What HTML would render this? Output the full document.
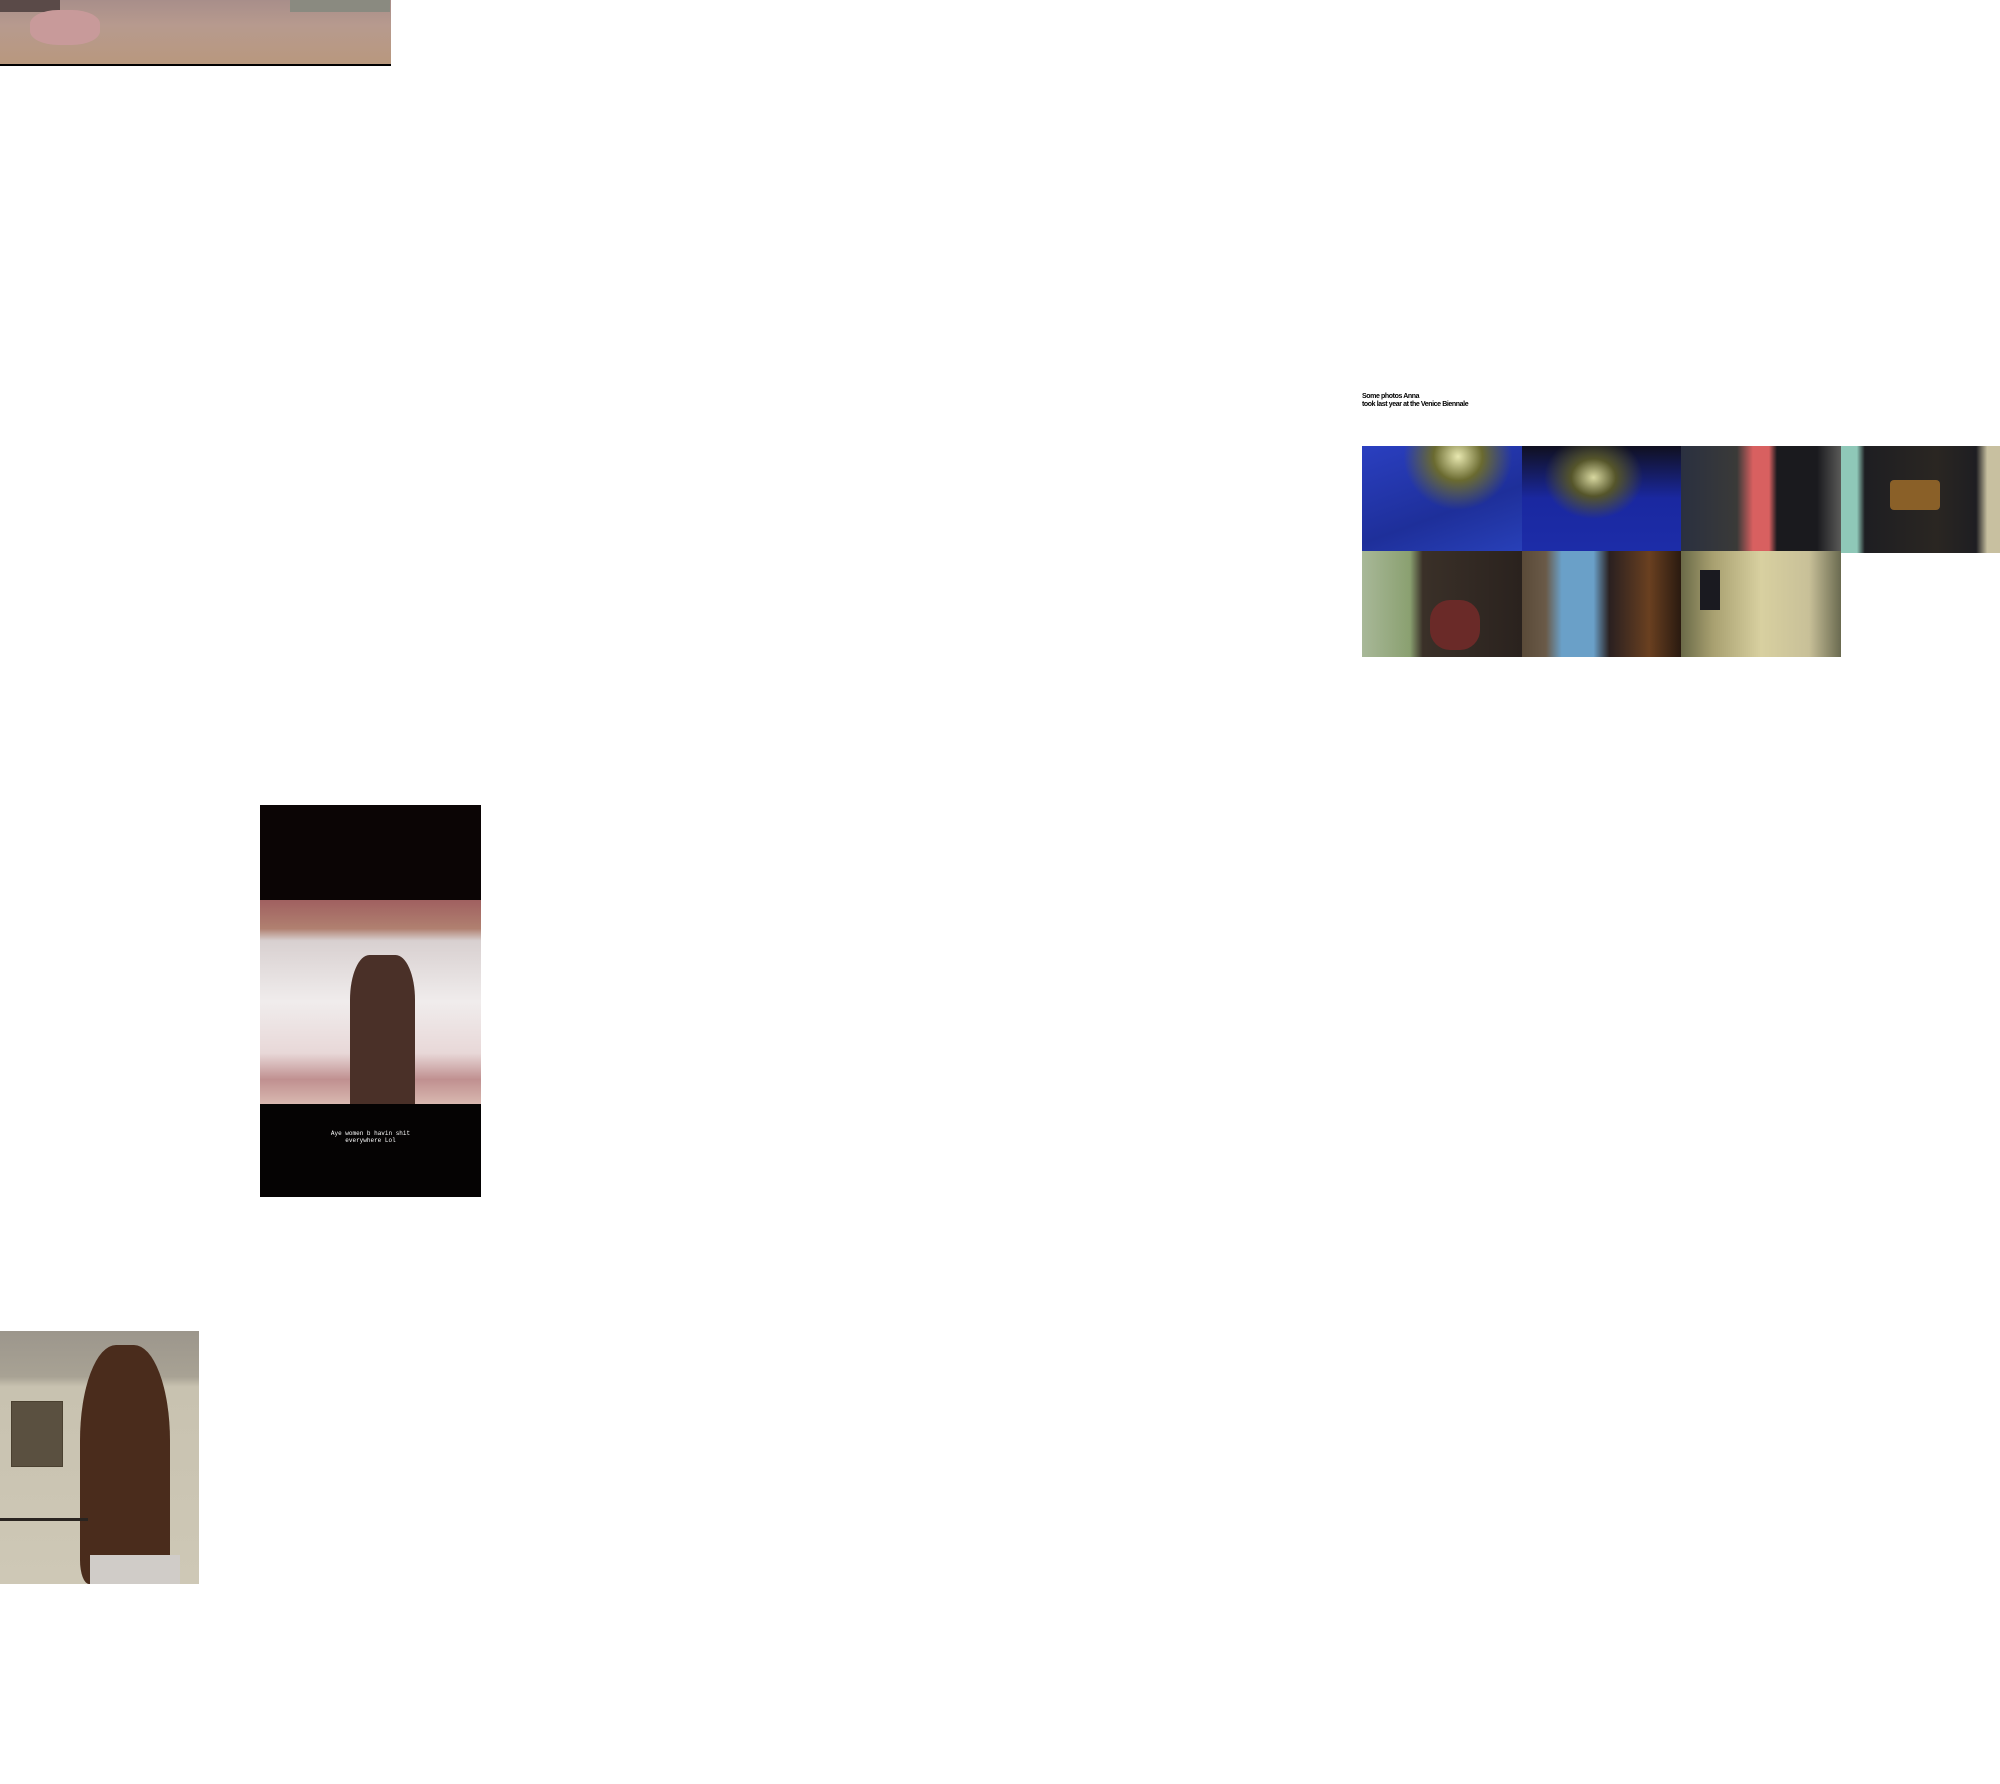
<!DOCTYPE html>
<html><head><meta charset="utf-8">
<style>
html,body{margin:0;padding:0;background:#fff;}
body{width:2000px;height:1784px;position:relative;overflow:hidden;}
.a{position:absolute;}
</style></head><body>

<!-- top image -->
<div class="a" style="left:0;top:0;width:391px;height:64px;background:linear-gradient(180deg,#a88e8a 0%,#b79a8e 40%,#b8987e 100%);"></div>
<div class="a" style="left:0;top:0;width:60px;height:12px;background:#5a4a48;"></div>
<div class="a" style="left:290px;top:0;width:100px;height:12px;background:#8a8a80;"></div>
<div class="a" style="left:30px;top:10px;width:70px;height:35px;border-radius:40%;background:#c89a9a;"></div>
<div class="a" style="left:0;top:64px;width:391px;height:2px;background:#000;"></div>

<!-- caption text -->
<div class="a" style="left:1362px;top:393px;font-family:'Liberation Sans',sans-serif;font-weight:bold;font-size:7px;line-height:8px;letter-spacing:-0.4px;color:#000;">Some photos Anna<br>took last year at the Venice Biennale</div>

<!-- grid -->
<div class="a" style="left:1362px;top:446px;width:160px;height:105px;background:radial-gradient(ellipse at 60% 10%,#e8e8b0 0%,#6a6a30 18%,transparent 40%),linear-gradient(160deg,#2a3fc0,#1e2f9a 60%,#2840b8);"></div>
<div class="a" style="left:1522px;top:446px;width:159px;height:105px;background:radial-gradient(ellipse at 45% 30%,#d8d8a0 0%,#55552a 18%,transparent 40%),linear-gradient(180deg,#101020,#1a28a0 50%,#1c2ca8);"></div>
<div class="a" style="left:1681px;top:446px;width:160px;height:105px;background:linear-gradient(90deg,#2a3040 0%,#3a3a38 35%,#d86060 45%,#d86060 55%,#1a1a1e 60%,#1a1a1e 85%,#5a5a58 100%);"></div>
<div class="a" style="left:1841px;top:446px;width:159px;height:107px;background:linear-gradient(90deg,#8fc8b8 0%,#8fc8b8 10%,#1e1e22 15%,#2a2622 60%,#1e1e22 85%,#c8c0a0 92%);"></div>
<div class="a" style="left:1890px;top:480px;width:50px;height:30px;background:#8a6028;border-radius:4px;"></div>

<div class="a" style="left:1362px;top:551px;width:160px;height:106px;background:linear-gradient(90deg,#a8b898 0%,#8aa070 30%,#3a3028 38%,#2a221e 100%);"></div>
<div class="a" style="left:1430px;top:600px;width:50px;height:50px;background:#6a2a28;border-radius:40%;"></div>
<div class="a" style="left:1522px;top:551px;width:159px;height:106px;background:linear-gradient(90deg,#5a4a38 0%,#6a5a48 15%,#6aa0c8 25%,#6aa0c8 45%,#2a2020 55%,#6a4020 80%,#2a1a10 100%);"></div>
<div class="a" style="left:1681px;top:551px;width:160px;height:106px;background:linear-gradient(90deg,#6a6a48 0%,#a8a070 20%,#d8d0a0 50%,#c8c098 80%,#6a6a50 100%);"></div>
<div class="a" style="left:1700px;top:570px;width:20px;height:40px;background:#1a1a20;"></div>

<!-- phone story -->
<div class="a" style="left:260px;top:805px;width:221px;height:392px;background:#0b0505;"></div>
<div class="a" style="left:260px;top:900px;width:221px;height:204px;background:linear-gradient(180deg,#a06060 0%,#b08070 14%,#d8d0d0 20%,#f0ecec 50%,#e8d8d8 75%,#c09090 88%,#d8b8b0 100%);"></div>
<div class="a" style="left:350px;top:955px;width:65px;height:149px;background:#4a3028;border-radius:30% 30% 0 0;"></div>
<div class="a" style="left:260px;top:1104px;width:221px;height:93px;background:#050303;"></div>
<div class="a" style="left:260px;top:1130px;width:221px;text-align:center;font-family:'Liberation Mono',monospace;font-size:6px;line-height:7px;color:#fff;">Aye women b havin shit<br>everywhere Lol</div>

<!-- bottom left -->
<div class="a" style="left:0;top:1331px;width:199px;height:253px;background:linear-gradient(180deg,#9c968c 0%,#a8a294 18%,#c8c2b0 22%,#cec8b6 100%);"></div>
<div class="a" style="left:11px;top:1401px;width:50px;height:64px;background:#5a5040;border:1px solid #4a4030;"></div>
<div class="a" style="left:80px;top:1345px;width:90px;height:239px;background:#4a2c1c;border-radius:40% 40% 10% 10%;"></div>
<div class="a" style="left:0;top:1518px;width:88px;height:3px;background:#2a2420;"></div>
<div class="a" style="left:90px;top:1555px;width:90px;height:29px;background:#d0ccc8;"></div>

</body></html>
